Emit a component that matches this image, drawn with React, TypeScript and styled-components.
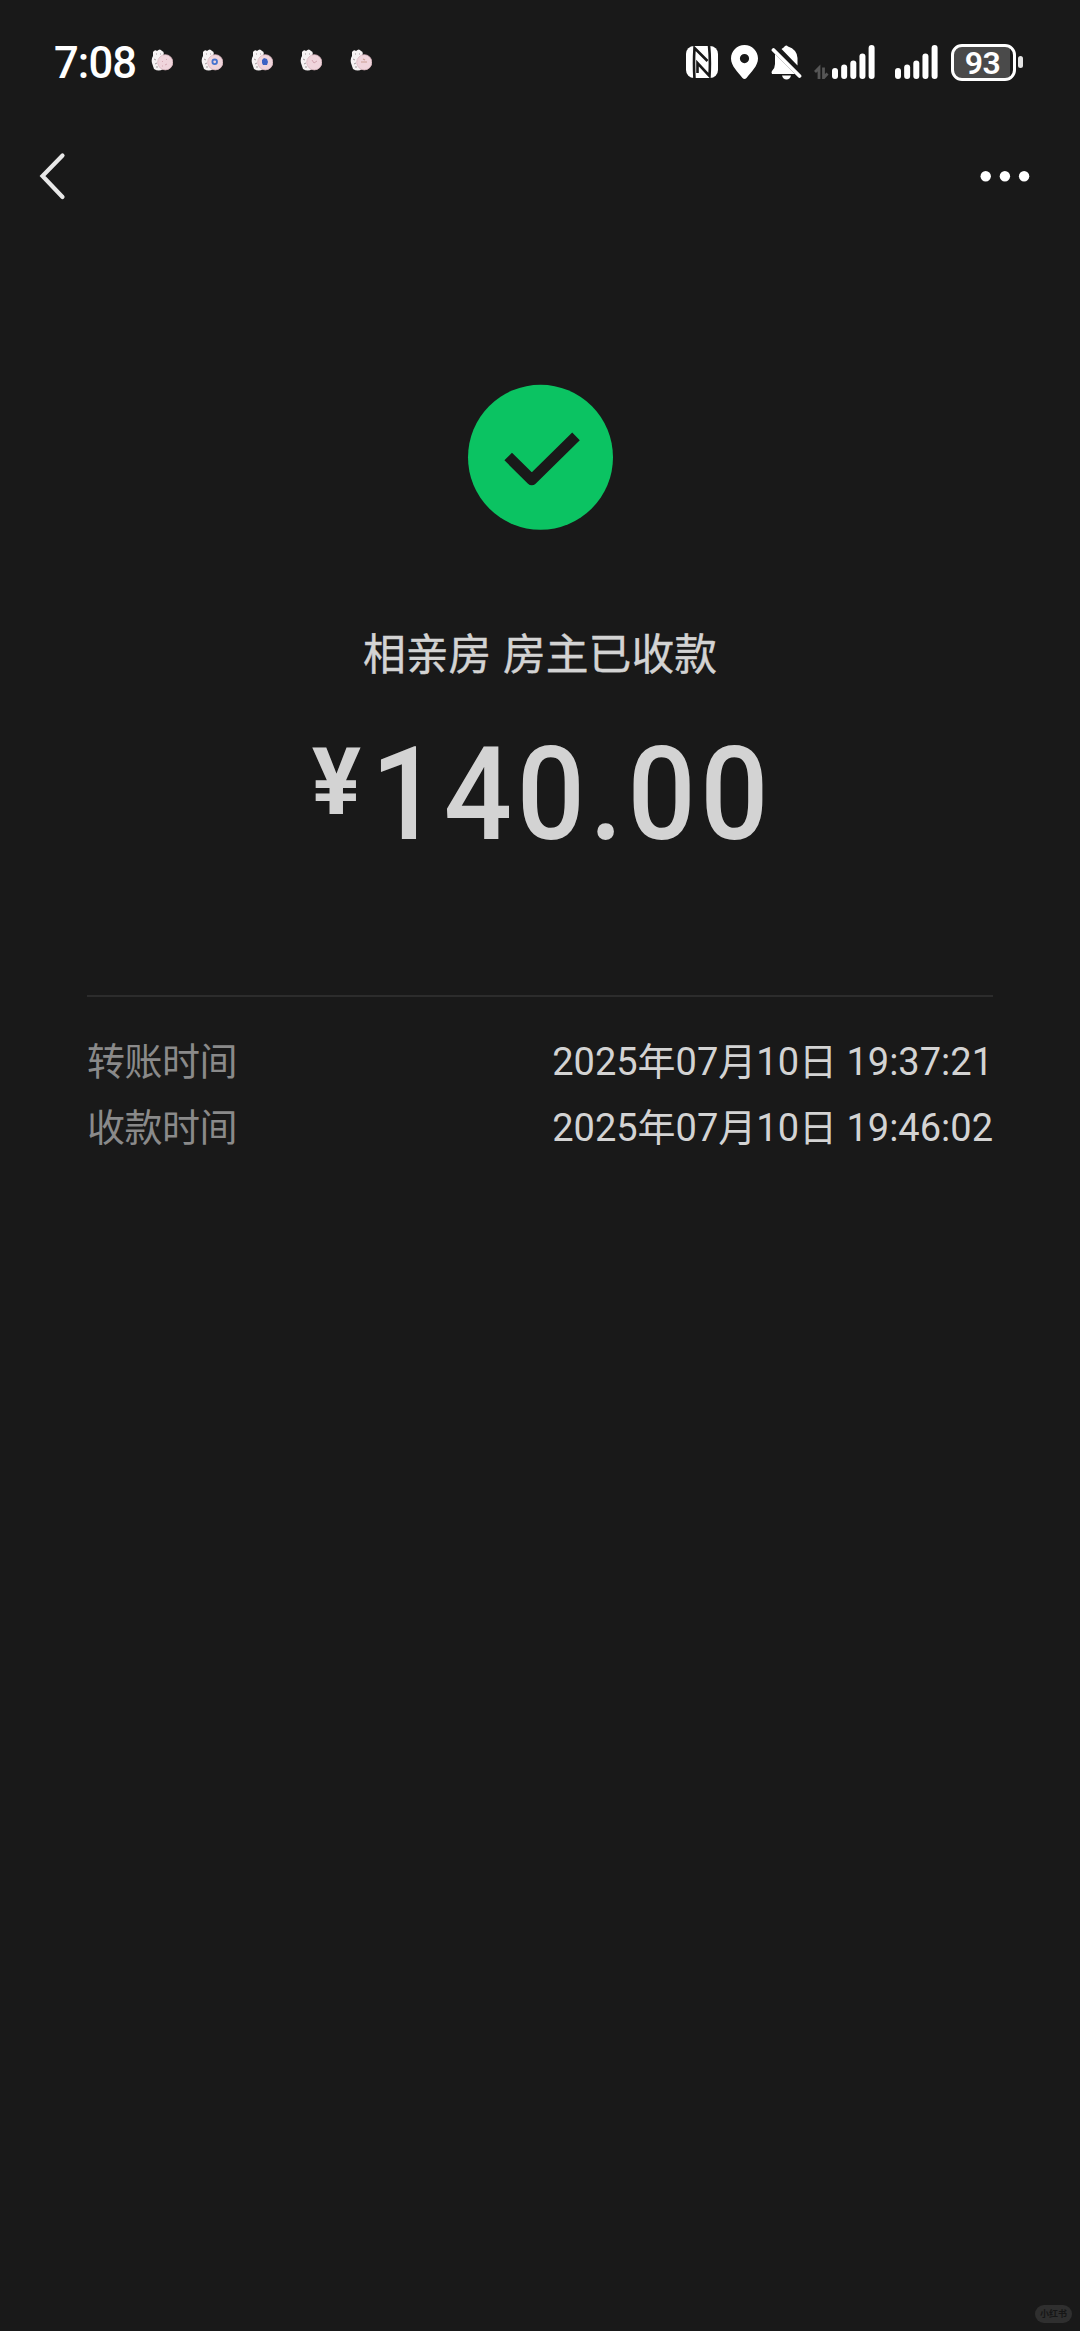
import React from 'react';
import styled, { createGlobalStyle } from 'styled-components';

const GlobalStyle = createGlobalStyle`
  * { box-sizing: border-box; }
  body { margin: 0; background: #191919; }
`;

const Screen = styled.main`
  display: flex;
  flex-direction: column;
  width: 1080px;
  height: 2331px;
  background: #191919;
  color: #d3d3d3;
  font-family: Roboto, 'Noto Sans CJK SC', sans-serif;
`;

const StatusBar = styled.header`
  display: flex;
  align-items: center;
  justify-content: space-between;
  height: 124px;
  padding: 0 57px 0 54px;
  color: #fff;
`;

const StatusGroup = styled.div`
  display: flex;
  align-items: center;
`;

const Clock = styled.span`
  width: 97px;
  padding-top: 3px;
  font-size: 43.5px;
  font-weight: 500;
  line-height: 60px;
  letter-spacing: -0.9px;
`;

const Stickers = styled.div`
  display: flex;
  gap: 27.8px;
  margin-top: -4px;
`;

const Icon = styled.svg<{ $gap?: number }>`
  display: block;
  flex: none;
  margin-left: ${(p) => p.$gap ?? 0}px;
`;

const Battery = styled.div`
  display: flex;
  align-items: center;
  margin-left: 13px;
`;

const BatteryBody = styled.div`
  width: 65px;
  height: 37px;
  padding-right: 2px;
  border: 3px solid #fff;
  border-radius: 11px;
  background: linear-gradient(to right, #4a4a4a 56px, #191919 56px);
  font-size: 32px;
  font-weight: 600;
  line-height: 32px;
  letter-spacing: -0.5px;
  text-align: center;
`;

const BatteryTip = styled.div`
  width: 5px;
  height: 12px;
  margin-left: 2px;
  border-radius: 3px;
  background: #e4e4e4;
`;

const NavBar = styled.nav`
  display: flex;
  align-items: center;
  justify-content: space-between;
  height: 104px;
  padding: 0 50px 0 39px;
`;

const NavButton = styled.button`
  display: flex;
  padding: 0;
  border: 0;
  background: none;
`;

const Result = styled.section`
  display: flex;
  flex-direction: column;
  align-items: center;
  padding-top: 156px;
`;

const Title = styled.h1`
  margin: 95px 0 0;
  font-size: 42.8px;
  font-weight: 400;
  line-height: 60px;
  word-spacing: 1px;
  white-space: nowrap;
  -webkit-text-stroke: 0.4px #d3d3d3;
`;

const Amount = styled.div`
  display: flex;
  align-items: flex-start;
  height: 150px;
  margin: 31px 0 0 5px;
  font-weight: 500;
`;

const Currency = styled.span`
  margin-right: 10px;
  font-size: 92px;
  font-weight: 700;
  line-height: 134px;
`;

/* Condensed numerals: narrowed glyphs with the tracking opened up again. */
const Digits = styled.span`
  margin-right: -35px;
  font-size: 130.5px;
  line-height: 157px;
  letter-spacing: 5px;
  transform: scaleX(0.92);
  transform-origin: left center;
`;

const Details = styled.dl`
  display: flex;
  flex-direction: column;
  margin: 129px 87px 0;
  padding-top: 32px;
  border-top: 2px solid #2c2c2c;
`;

const DetailRow = styled.div`
  display: flex;
  justify-content: space-between;
  height: 66px;
  font-size: 38px;
  line-height: 66px;
  white-space: nowrap;
`;

const Label = styled.dt`
  color: #8a8a8a;
  letter-spacing: -0.5px;
`;

const Value = styled.dd`
  margin: 0;
`;

const Badge = styled.footer`
  align-self: flex-end;
  width: 37px;
  height: 18px;
  margin: auto 8px 8px 0;
  border-radius: 9px;
  background: #2f2f2f;
  color: #161616;
  font-size: 9px;
  font-weight: 700;
  line-height: 18px;
  text-align: center;
`;

type StickerKind = 'plain' | 'ring' | 'dot' | 'spark' | 'line';

const stickerKinds: StickerKind[] = ['plain', 'ring', 'dot', 'spark', 'line'];

const Sticker = ({ kind }: { kind: StickerKind }) => (
  <Icon width="22" height="22" viewBox="0 0 22 22">
    <path
      d="M2 3 Q4 0 6 2 Q9-1 11 2 Q14 3 12 7 L12 20 Q8 23 3 20 Q2 17 1 14 Q0 10 2 7 Z"
      fill="#f6f2f3"
    />
    <path d="M5 5h1M9 5h1M3 10l2 1M4 15l2-1M5 18h2" stroke="#9b9094" strokeWidth=".9" />
    <circle cx="14.3" cy="13.3" r="7.6" fill="#f0d5dc" stroke="#dcb9c2" strokeWidth=".8" />
    {kind === 'plain' && <path d="M11 12l1 1M15 10l1 1M16 15l-2 1M11 17h1" stroke="#d7a9b5" />}
    {kind === 'ring' && <circle cx="13.7" cy="12.8" r="2.3" fill="none" stroke="#4673cf" strokeWidth="1.8" />}
    {kind === 'dot' && <path d="M11 11l2-2 3 1 1 3-1 3h-4l-1-2z" fill="#3c62c4" />}
    {kind === 'spark' && <path d="M12 11l2 3 3-2" fill="none" stroke="#d3a5b0" />}
    {kind === 'line' && <path d="M11 13h6M13 10l2 1" stroke="#c99f93" strokeWidth="1.2" />}
  </Icon>
);

const barTops = [23, 19.5, 15.5, 8.5, 0];

const Signal = ({ gap }: { gap: number }) => (
  <Icon $gap={gap} width="43" height="34" viewBox="0 0 43 34">
    {barTops.map((top, i) => (
      <rect key={top} x={i * 9.15} y={top} width="6" height={34 - top} rx="3" fill="#fff" />
    ))}
  </Icon>
);

const details = [
  { label: '转账时间', value: '2025年07月10日 19:37:21' },
  { label: '收款时间', value: '2025年07月10日 19:46:02' },
];

export default function App() {
  return (
    <Screen>
      <GlobalStyle />
      <StatusBar>
        <StatusGroup>
          <Clock>7:08</Clock>
          <Stickers>
            {stickerKinds.map((kind) => (
              <Sticker key={kind} kind={kind} />
            ))}
          </Stickers>
        </StatusGroup>
        <StatusGroup>
          <Icon width="32" height="34" viewBox="0 0 32 34">
            <rect y="1" width="32" height="32" rx="8" fill="#fff" />
            <path d="M8.500 34Q7.500 18 8.500 3L21.500 16" fill="none" stroke="#191919" strokeWidth="2.600" />
            <path d="M23 0Q24.500 15 23.500 31L11.500 18V28" fill="none" stroke="#191919" strokeWidth="2.600" />
          </Icon>
          <Icon $gap={13} width="27" height="34" viewBox="0 0 27 34">
            <path
              fillRule="evenodd"
              d="M13.5 0C6 0 0 6 0 13.5C0 21 7 27 11.5 33Q13.5 35 15.5 33C20 27 27 21 27 13.5C27 6 21 0 13.5 0ZM13.5 9a4.6 4.6 0 1 1 0 9.200a4.600 4.600 0 1 1 0-9.200Z"
              fill="#fff"
            />
          </Icon>
          <Icon $gap={13} width="31" height="35" viewBox="0 0 31 35">
            <path d="M10.500 4Q13 2.500 14 1Q15.500 0 17 1.500Q26 4.500 26.500 13V20.500Z" fill="#fff" />
            <path d="M4 9L24 29H1Q0 27 1 26Q4 23 4 19Z" fill="#fff" />
            <path d="M2.500 5L28.500 31" stroke="#fff" strokeWidth="3.800" strokeLinecap="round" />
            <path d="M11 30.500H20Q19 34.500 15.500 34.500Q12 34.500 11 30.500Z" fill="#fff" />
          </Icon>
          <Icon $gap={12} width="15" height="34" viewBox="0 0 15 34">
            <path d="M1 27L5 23V34M9.500 22.500V33L13.500 28.500" fill="none" stroke="#565656" strokeWidth="2.800" />
          </Icon>
          <Signal gap={3} />
          <Signal gap={20} />
          <Battery>
            <BatteryBody>93</BatteryBody>
            <BatteryTip />
          </Battery>
        </StatusGroup>
      </StatusBar>
      <NavBar>
        <NavButton aria-label="返回">
          <Icon width="27" height="48" viewBox="0 0 27 48">
            <path d="M23.500 3.500L3.500 24L23.500 45" fill="none" stroke="#e8e8e8" strokeWidth="4.200" strokeLinecap="round" />
          </Icon>
        </NavButton>
        <NavButton aria-label="更多">
          <Icon width="50" height="12" viewBox="0 0 50 12">
            <circle cx="5.700" cy="6.300" r="5.200" fill="#fff" />
            <circle cx="24.900" cy="6.300" r="5.200" fill="#fff" />
            <circle cx="44.100" cy="6.300" r="5.200" fill="#fff" />
          </Icon>
        </NavButton>
      </NavBar>
      <Result>
        <Icon width="146" height="146" viewBox="0 0 146 146">
          <circle cx="73.500" cy="73.300" r="72.500" fill="#0bc362" />
          <path
            d="M41.200 72.500L64.800 95.800L109 52.300"
            fill="none"
            stroke="#191919"
            strokeWidth="10.800"
            strokeLinejoin="round"
          />
        </Icon>
        <Title>相亲房 房主已收款</Title>
        <Amount>
          <Currency>¥</Currency>
          <Digits>140.00</Digits>
        </Amount>
      </Result>
      <Details>
        {details.map((row) => (
          <DetailRow key={row.label}>
            <Label>{row.label}</Label>
            <Value>{row.value}</Value>
          </DetailRow>
        ))}
      </Details>
      <Badge>小红书</Badge>
    </Screen>
  );
}
